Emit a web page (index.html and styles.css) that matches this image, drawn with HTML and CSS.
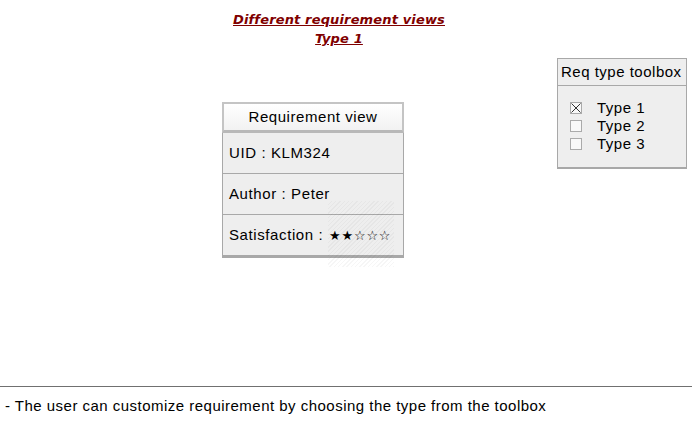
FILE: index.html
```html
<!DOCTYPE html>
<html>
<head>
<meta charset="utf-8">
<link rel="stylesheet" href="styles.css">
</head>
<body>
<div class="page">
  <header class="title">
    <div class="title-line">Different requirement views</div>
    <div class="title-line">Type 1</div>
  </header>
  <main class="diagram">
    <section class="req">
      <div class="req-head">Requirement view</div>
      <div class="req-row">UID : KLM324</div>
      <div class="req-row">Author : Peter</div>
      <div class="req-row">Satisfaction : <span class="stars">★★☆☆☆</span></div>
      <div class="hatch"></div>
    </section>
    <aside class="toolbox">
      <div class="tb-head">Req type toolbox</div>
      <ul class="tb-list">
        <li class="tb-item"><span class="cb checked"><svg viewBox="0 0 12 12" width="12" height="12"><path d="M1.5 1.5L10.5 10.5M10.5 1.5L1.5 10.5" stroke="#333" stroke-width="1"/></svg></span>Type 1</li>
        <li class="tb-item"><span class="cb"></span>Type 2</li>
        <li class="tb-item"><span class="cb"></span>Type 3</li>
      </ul>
    </aside>
  </main>
  <footer class="legend">- The user can customize requirement by choosing the type from the toolbox</footer>
</div>
</body>
</html>
```
FILE: styles.css
```css
html, body {
  margin: 0;
  padding: 0;
  background: #ffffff;
}
.page {
  width: 692px;
  height: 421px;
  display: flex;
  flex-direction: column;
  font-family: "Liberation Sans", Arial, sans-serif;
  color: #000;
  overflow: hidden;
}
.title {
  flex-shrink: 0;
  height: 58px;
  box-sizing: border-box;
  padding-top: 10px;
  padding-right: 14px;
  text-align: center;
  font-family: "DejaVu Sans", sans-serif;
  font-weight: bold;
  font-style: italic;
  font-size: 13px;
  letter-spacing: 0.15px;
  line-height: 19px;
  color: #7f0000;
}
.title-line {
  text-decoration: underline;
}
.diagram {
  flex-shrink: 0;
  height: 328px;
  display: flex;
  align-items: flex-start;
}
.req {
  position: relative;
  margin-left: 222px;
  margin-top: 44px;
  width: 182px;
  box-sizing: border-box;
  background: #eeeeee;
  border: 1px solid #a8a8a8;
  border-bottom-width: 2px;
  font-size: 15px;
  letter-spacing: 0.6px;
}
.req-head {
  height: 31px;
  box-sizing: border-box;
  border: 2px solid #c4c4c4;
  margin: -1px -1px 0 -1px;
  background: linear-gradient(#ffffff, #f2f2f2);
  border-bottom: 3px solid #b8b8b8;
  text-align: center;
  line-height: 26px;
  letter-spacing: 0.55px;
}
.req-row {
  height: 41px;
  box-sizing: border-box;
  padding-left: 6px;
  line-height: 40px;
  border-bottom: 1px solid #a8a8a8;
}
.req-row:last-of-type {
  border-bottom: none;
  height: 39px;
  line-height: 39px;
}
.stars {
  font-family: "DejaVu Sans", sans-serif;
  font-size: 13px;
  letter-spacing: 0.8px;
  margin-left: 1px;
}
.hatch {
  position: absolute;
  left: 105px;
  top: 98px;
  width: 66px;
  height: 66px;
  background: repeating-linear-gradient(-45deg, rgba(0,0,0,0.035) 0 1px, rgba(0,0,0,0) 1px 3px);
  pointer-events: none;
}
.toolbox {
  margin-left: 153px;
  width: 130px;
  box-sizing: border-box;
  background: #eeeeee;
  border: 1px solid #a8a8a8;
  border-bottom-width: 2px;
  font-size: 15px;
  letter-spacing: 0.5px;
  height: 111px;
}
.tb-head {
  height: 27px;
  box-sizing: border-box;
  border-bottom: 1px solid #a8a8a8;
  padding-left: 3px;
  line-height: 26px;
}
.tb-list {
  list-style: none;
  margin: 0;
  padding: 13px 0 0 12px;
}
.tb-item {
  display: flex;
  align-items: center;
  height: 18px;
  line-height: 18px;
}
.cb {
  display: inline-block;
  width: 12px;
  height: 12px;
  box-sizing: border-box;
  border: 1px solid #aaaaaa;
  background: #f8f8f8;
  margin-right: 15px;
  position: relative;
}
.cb svg {
  position: absolute;
  left: -1px;
  top: -1px;
}
.legend {
  flex-shrink: 0;
  border-top: 1px solid #707070;
  padding-left: 5px;
  font-size: 15px;
  line-height: 38px;
  letter-spacing: 0.48px;
}
```
